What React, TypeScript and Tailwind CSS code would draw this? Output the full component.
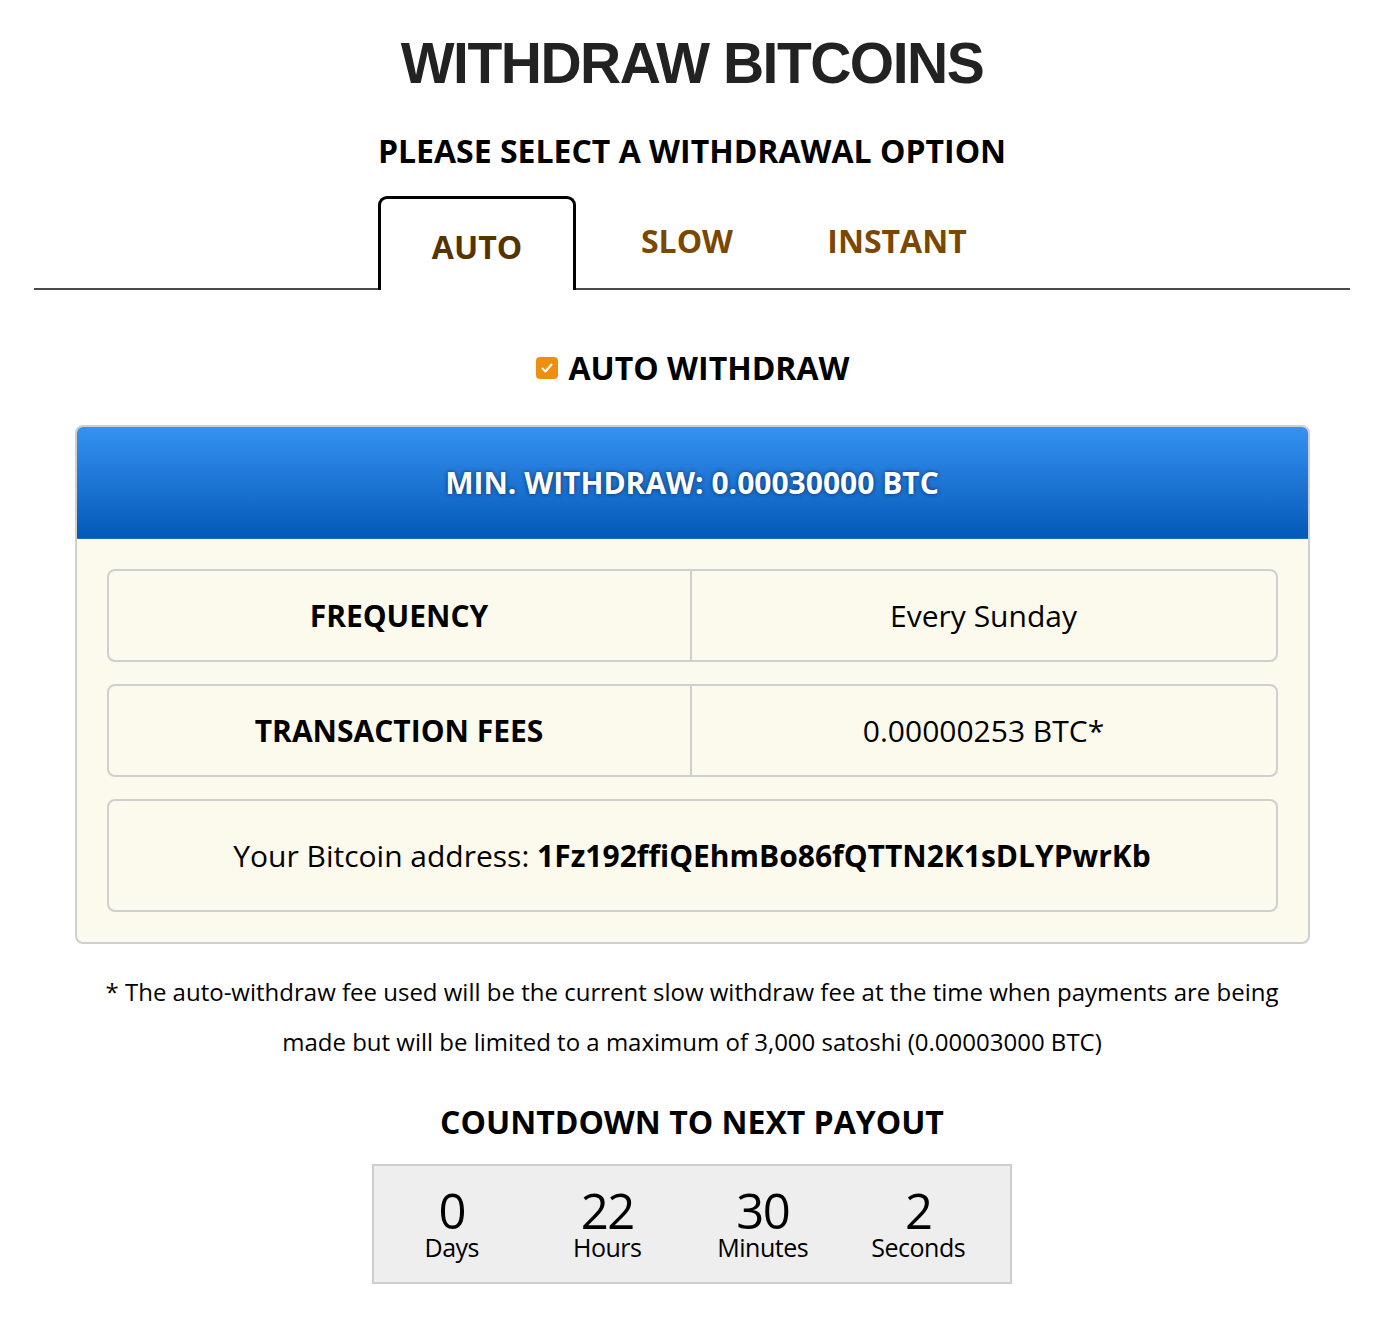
import React from "react";

const os = { fontFamily: '"Open Sans", "Noto Sans", sans-serif' };

export default function App() {
  return (
    <div className="min-h-[1338px] bg-white text-black" style={os}>
      <div className="ml-[34px] w-[1316px] pt-[30px]">
        <h1
          className="text-center text-[57px] font-bold leading-[66px] tracking-[-1.5px] text-[#222]"
          style={{ fontFamily: '"Liberation Sans", Arial, sans-serif' }}
        >
          WITHDRAW BITCOINS
        </h1>
        <h2 className="mt-[35px] text-center text-[32px] font-bold leading-[40px]">
          PLEASE SELECT A WITHDRAWAL OPTION
        </h2>
        <div className="mt-[25px] flex h-[94px] items-end justify-center border-b-2 border-[#4a4a4a] pr-[10px]">
          <div className="relative -mb-[2px] flex h-[94px] w-[198px] items-center justify-center rounded-t-[9px] border-[3px] border-b-0 border-black bg-white pt-[4px]">
            <span className="text-[32px] font-bold text-[#563300]">AUTO</span>
          </div>
          <div className="flex h-[94px] w-[222px] items-center justify-center">
            <span className="text-[32px] font-bold text-[#7a4800]">SLOW</span>
          </div>
          <div className="flex h-[94px] w-[198px] items-center justify-center">
            <span className="text-[32px] font-bold text-[#7a4800]">INSTANT</span>
          </div>
        </div>
        <div className="mt-[58px] flex items-center justify-center gap-[11px] pl-[1px]">
          <span className="flex h-[22px] w-[22px] items-center justify-center rounded-[4px] bg-[#ee8f10]">
            <svg width="14" height="14" viewBox="0 0 14 14" fill="none">
              <path d="M2.5 7.5 L5.5 10.5 L11.5 3.5" stroke="white" strokeWidth="2" strokeLinecap="round" strokeLinejoin="round" />
            </svg>
          </span>
          <span className="text-[32px] font-bold leading-[40px]">AUTO WITHDRAW</span>
        </div>
        <div className="mx-auto mt-[37px] w-[1235px] overflow-hidden rounded-[8px] border-2 border-[#cfcfcf] bg-[#fcfaec]">
          <div className="-mx-[2px] -mt-[2px] flex h-[114px] items-center justify-center rounded-t-[8px] border border-[#1a6fd0] bg-gradient-to-b from-[#3593f2] to-[#0259b7]">
            <span
              className="text-[30px] font-bold text-white"
              style={{ textShadow: "0 0 4px rgba(0,30,80,0.8)" }}
            >
              MIN. WITHDRAW: 0.00030000 BTC
            </span>
          </div>
          <div className="flex flex-col gap-[22px] px-[30px] pb-[30px] pt-[30px]">
            <div className="flex h-[93px] rounded-[8px] border-2 border-[#cfcfcf]">
              <div className="flex w-[583px] items-center justify-center border-r-2 border-[#cfcfcf] text-[30px] font-bold">
                FREQUENCY
              </div>
              <div className="flex flex-1 items-center justify-center text-[30px]">Every Sunday</div>
            </div>
            <div className="flex h-[93px] rounded-[8px] border-2 border-[#cfcfcf]">
              <div className="flex w-[583px] items-center justify-center border-r-2 border-[#cfcfcf] text-[30px] font-bold">
                TRANSACTION FEES
              </div>
              <div className="flex flex-1 items-center justify-center text-[30px]">0.00000253 BTC*</div>
            </div>
            <div className="flex h-[113px] items-center justify-center rounded-[8px] border-2 border-[#cfcfcf] text-[30px]">
              <span>
                Your Bitcoin address: <b className="font-bold">1Fz192ffiQEhmBo86fQTTN2K1sDLYPwrKb</b>
              </span>
            </div>
          </div>
        </div>
        <p className="mt-[23px] text-center text-[24px] leading-[50px]">
          * The auto-withdraw fee used will be the current slow withdraw fee at the time when payments are being
          <br />
          made but will be limited to a maximum of 3,000 satoshi (0.00003000 BTC)
        </p>
        <h3 className="mt-[35px] text-center text-[32px] font-bold leading-[40px]">COUNTDOWN TO NEXT PAYOUT</h3>
        <div className="mx-auto mt-[22px] flex h-[120px] w-[640px] items-center justify-start border-2 border-[#cfcfcf] bg-[#eeeeee]">
          {[
            ["0", "Days"],
            ["22", "Hours"],
            ["30", "Minutes"],
            ["2", "Seconds"],
          ].map(([n, l]) => (
            <div key={l} className="flex w-[155.5px] flex-col items-center pt-[2px]">
              <span className="text-[49px] leading-[44px] tracking-[-1.5px]">{n}</span>
              <span className="text-[25px] leading-[30px] tracking-[-0.5px]">{l}</span>
            </div>
          ))}
        </div>
      </div>
    </div>
  );
}
